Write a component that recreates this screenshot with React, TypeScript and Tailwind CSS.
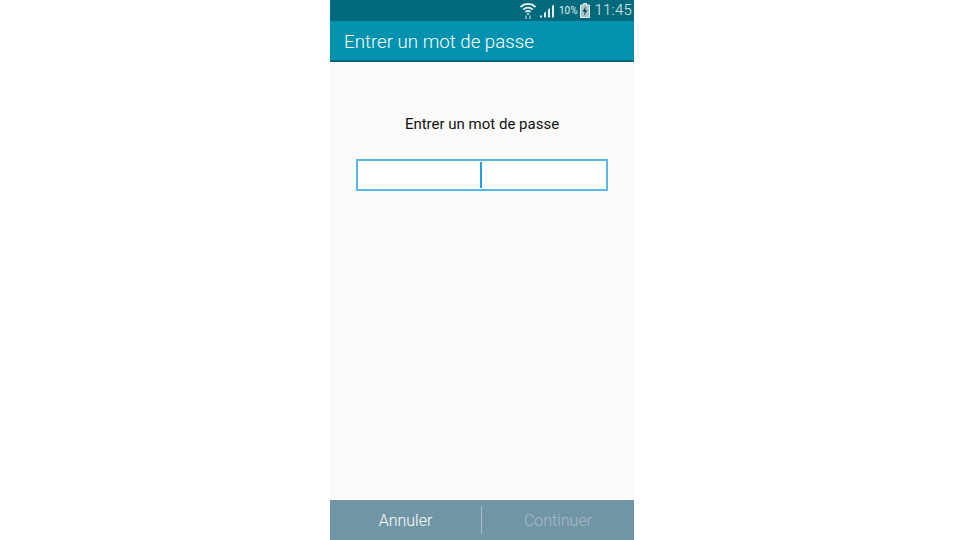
import React from 'react';

const App: React.FC = () => {
  return (
    <div className="w-[960px] h-[540px] bg-white flex pl-[330px]" style={{ fontFamily: 'Roboto, sans-serif' }}>
      <div className="w-[304px] h-full flex flex-col bg-[#fbfbfb]">
        {/* Status bar */}
        <div className="h-[21px] bg-[#006a7d] flex items-center justify-end pr-[2px] text-[#e4eff1]">
          <svg viewBox="0 0 18 18" className="w-[18px] h-[18px] mr-[3px] mt-[-1px]" fill="none" stroke="currentColor" strokeWidth="1.8">
            <path d="M1.5 6a10.5 10.5 0 0 1 15 0" />
            <path d="M4.2 8.7a6.8 6.8 0 0 1 9.6 0" />
            <path d="M6.6 11a3.4 3.4 0 0 1 4.8 0" />
            <circle cx="9" cy="13" r="1" fill="currentColor" stroke="none" />
            <path d="M7 14.5v3.5M11 14.5v3.5" strokeWidth="1" />
          </svg>
          <svg viewBox="0 0 14 14" className="w-[14px] h-[15px] mr-[5px] mt-[1px]" fill="currentColor">
            <rect x="0" y="11" width="2" height="2" />
            <path d="M4 13V8.5l2-1.5v6z" />
            <path d="M8 13V5l2-1.5V13z" />
            <path d="M12 13V1.5L14 0v13z" />
          </svg>
          <span className="text-[10px] leading-none mr-[2px]">10%</span>
          <svg viewBox="0 0 10 15" className="w-[10px] h-[15px] mr-[5px]">
            <path d="M3.5 0.5h3v1.5h3v12.5h-9v-12.5h3z" fill="#a9c6cb" stroke="currentColor" strokeWidth="1" />
            <path d="M6 3 2.6 8.4h2.2l-.9 4.4 3.4-5.6H5z" fill="#083a44" />
          </svg>
          <span className="text-[15px] font-light leading-none tracking-[0.2px]">11:45</span>
        </div>

        {/* Title bar */}
        <div className="h-[41px] bg-[#0092ae] border-b-2 border-[#04687c] flex items-center pl-[14px] pt-[3px]">
          <span className="text-[18.7px] font-light text-white">Entrer un mot de passe</span>
        </div>

        {/* Content */}
        <div className="flex-1 flex flex-col items-center">
          <p className="mt-[52px] text-[15px] leading-5 text-[#111]">Entrer un mot de passe</p>
          <div className="mt-[25px] w-[252px] h-[32px] border-2 border-[#5cb8e6] bg-white flex items-center justify-center">
            <div className="w-[2px] h-[26px] ml-[-2px] bg-[#1e9ef0]" />
          </div>
        </div>

        {/* Bottom buttons */}
        <div className="h-[40px] bg-[#7095a4] flex items-center">
          <div className="w-[151px] text-center text-[16px] font-light pt-[1px] text-white">Annuler</div>
          <div className="w-px h-[28px] bg-[#a9c0c9]" />
          <div className="flex-1 text-center text-[16px] font-light pt-[1px] text-[#a9bcc4]">Continuer</div>
        </div>
      </div>
    </div>
  );
};

export default App;
